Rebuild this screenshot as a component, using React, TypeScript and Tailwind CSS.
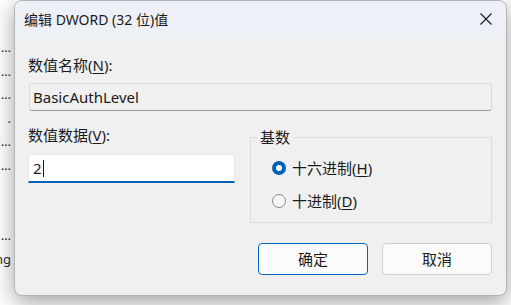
import React from "react";

const font = {
  fontFamily: '"Segoe UI", "Noto Sans", "Noto Sans CJK SC", sans-serif',
};

const behindRows = ["…", "…", "…", ".", "i…", "…", "", "", "…", "ng"];

function Radio({ checked, label, hotkey }: { checked: boolean; label: string; hotkey: string }) {
  return (
    <div className="flex items-center h-[20px]">
      {checked ? (
        <span className="w-[14px] h-[14px] rounded-full bg-[#005fb8] flex items-center justify-center">
          <span className="w-[6px] h-[6px] rounded-full bg-white" />
        </span>
      ) : (
        <span className="w-[14px] h-[14px] rounded-full border border-[#8a8a8a] bg-[#f5f5f5]" />
      )}
      <span className="ml-[6px] text-[15px] leading-[20px] text-[#1a1a1a]">
        {label}(<span className="underline underline-offset-2">{hotkey}</span>)
      </span>
    </div>
  );
}

export default function App() {
  return (
    <div className="w-[511px] h-[305px] bg-white overflow-hidden flex" style={font}>
      {/* strip of the window behind */}
      <div className="w-[14px] shrink-0 pt-[36px] flex flex-col text-[13px] leading-[23.5px] text-[#1f2a37] overflow-hidden">
        {behindRows.map((r, i) => (
          <div key={i} className="h-[23.5px] flex justify-end pr-[3px] whitespace-nowrap">
            {r}
          </div>
        ))}
      </div>

      {/* dialog */}
      <div className="w-[493px] h-[296px] shrink-0 rounded-[8px] border border-[#b4b4b4] bg-[#f0f0f0] overflow-hidden shadow-[0_6px_22px_rgba(0,0,0,0.38)] flex flex-col">
        <div className="h-[37px] bg-[#eef0f8] flex items-center justify-between pl-[9px] pr-[14px]">
          <span className="text-[14px] text-[#1a1a1a]">编辑 DWORD (32 位)值</span>
          <svg width="12" height="12" viewBox="0 0 12 12" className="mb-[1px]">
            <path d="M0.5 0.5 L11.5 11.5 M11.5 0.5 L0.5 11.5" stroke="#1a1a1a" strokeWidth="1.1" />
          </svg>
        </div>

        <div className="flex flex-col pl-[13px] pr-[14px] pt-[17px]">
          <div className="text-[15px] leading-[20px] text-[#1a1a1a]">
            数值名称(<span className="underline underline-offset-2">N</span>):
          </div>
          <div className="mt-[8px] ml-[1px] h-[28px] border border-[#dadada] border-b-[#9a9a9a] rounded-[3px] bg-[#f0f0f0] flex items-center px-[3px] text-[15px] text-[#1a1a1a]">
            BasicAuthLevel
          </div>

          <div className="flex mt-[14px]">
            <div className="w-[207px] flex flex-col">
              <div className="text-[15px] leading-[20px] text-[#1a1a1a]">
                数值数据(<span className="underline underline-offset-2">V</span>):
              </div>
              <div className="mt-[9px] h-[29px] bg-white border border-[#e6e6e6] border-b-2 border-b-[#005fb8] rounded-t-[3px] flex items-center px-[4px] text-[15px] text-[#1a1a1a]">
                2<span className="ml-[1px] w-[1px] h-[17px] bg-[#1a1a1a]" />
              </div>
            </div>

            <fieldset className="ml-[15px] mt-[2px] w-[242px] h-[96px] border border-[#dcdcdc]">
              <legend className="ml-[6px] px-[3px] text-[15px] leading-[20px] text-[#1a1a1a]">基数</legend>
              <div className="pl-[21px] pt-[11px] flex flex-col gap-[13px]">
                <Radio checked label="十六进制" hotkey="H" />
                <Radio checked={false} label="十进制" hotkey="D" />
              </div>
            </fieldset>
          </div>

          <div className="flex justify-end gap-[14px] mt-[20px]">
            <button className="w-[110px] h-[32px] rounded-[4px] border border-[#0067c0] bg-[#fbfbfb] text-[15px] text-[#1a1a1a]">
              确定
            </button>
            <button className="w-[110px] h-[32px] rounded-[4px] border border-[#d0d0d0] bg-[#fbfbfb] text-[15px] text-[#1a1a1a]">
              取消
            </button>
          </div>
        </div>
      </div>
    </div>
  );
}
